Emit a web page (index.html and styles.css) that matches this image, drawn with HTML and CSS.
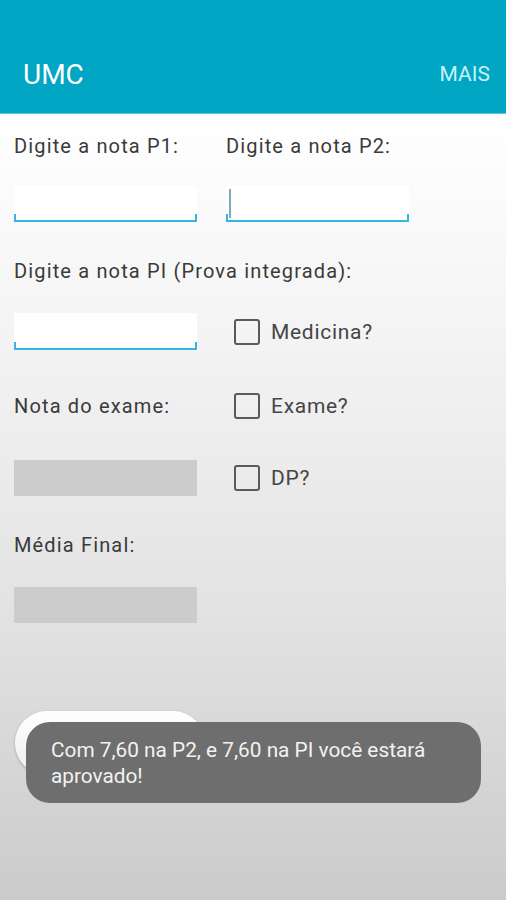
FILE: index.html
```html
<!DOCTYPE html>
<html lang="pt">
<head>
<meta charset="utf-8">
<title>UMC</title>
<link rel="stylesheet" href="styles.css">
</head>
<body>
<div class="screen">
  <header class="appbar">
    <span class="title">UMC</span>
    <span class="action">MAIS</span>
  </header>
  <main class="form">
    <div class="row r1">
      <div class="col1 label">Digite a nota P1:</div>
      <div class="col2 label">Digite a nota P2:</div>
    </div>
    <div class="row r2">
      <div class="col1 input"></div>
      <div class="col2 input focused"><span class="cursor"></span></div>
    </div>
    <div class="row r3">
      <div class="label">Digite a nota PI (Prova integrada):</div>
    </div>
    <div class="row r4">
      <div class="col1 input pi"></div>
      <label class="col2 check"><span class="box"></span><span class="check-text">Medicina?</span></label>
    </div>
    <div class="row r5">
      <div class="col1 label">Nota do exame:</div>
      <label class="col2 check"><span class="box"></span><span class="check-text">Exame?</span></label>
    </div>
    <div class="row r6">
      <div class="col1 disabled"></div>
      <label class="col2 check"><span class="box"></span><span class="check-text">DP?</span></label>
    </div>
    <div class="row r7">
      <div class="col1 label">Média Final:</div>
    </div>
    <div class="row r8">
      <div class="col1 disabled"></div>
    </div>
    <div class="row r9">
      <div class="button"><span class="btn-mark"></span></div>
    </div>
  </main>
  <div class="toast">Com 7,60 na P2, e 7,60 na PI você estará aprovado!</div>
</div>
</body>
</html>
```

FILE: styles.css
```css
* { box-sizing: border-box; }
html, body { margin: 0; padding: 0; }
body {
  font-family: Roboto, "Noto Sans", "Liberation Sans", sans-serif;
  width: 506px;
  height: 900px;
  overflow: hidden;
}
.screen {
  position: relative;
  width: 506px;
  height: 900px;
  background: linear-gradient(to bottom, #ffffff 114px, #f4f4f4 330px, #e2e2e2 620px, #cbcbcb 900px);
}
.appbar {
  height: 114px;
  background: #00a6c4;
  display: flex;
  align-items: flex-end;
  justify-content: space-between;
  padding: 0 16px 22px 23px;
  border-bottom: 1px solid #5cc8db;
}
.title {
  color: #ffffff;
  font-size: 28px;
  line-height: 32px;
}
.action {
  color: #c6f3fa;
  font-size: 21px;
  line-height: 32px;
  padding-bottom: 1px;
}
.form {
  padding: 0 14px;
}
.row {
  display: flex;
  align-items: center;
}
.col1 { width: 183px; flex: none; }
.col2 { margin-left: 29px; }
.label {
  font-size: 20px;
  line-height: 24px;
  letter-spacing: 1.15px;
  color: #3a3a3a;
  white-space: nowrap;
}
.r1 { margin-top: 20px; }
.r2 { margin-top: 28px; }
.r3 { margin-top: 37px; }
.r4 { margin-top: 30px; }
.r5 { margin-top: 43px; }
.r6 { margin-top: 41px; }
.r7 { margin-top: 37px; }
.r8 { margin-top: 30px; }
.r9 { margin-top: 88px; }
.input {
  position: relative;
  height: 36px;
  width: 183px;
  background: #ffffff;
  border-bottom: 2px solid #33b5e5;
}
.input::before, .input::after {
  content: "";
  position: absolute;
  bottom: 0;
  width: 2px;
  height: 6px;
  background: #33b5e5;
}
.input::before { left: 0; }
.input::after { right: 0; }
.input.pi { height: 37px; }
.cursor {
  position: absolute;
  left: 3px;
  top: 3px;
  width: 2px;
  height: 29px;
  background: #7fa9b8;
}
.check {
  display: flex;
  align-items: center;
  margin-left: 37px;
}
.box {
  width: 26px;
  height: 26px;
  border: 2px solid #5a5a5a;
  border-radius: 3px;
  flex: none;
}
.check-text {
  margin-left: 11px;
  font-size: 21px;
  line-height: 24px;
  letter-spacing: 0.7px;
  color: #454545;
}
.disabled {
  height: 36px;
  background: #cccccc;
}
.button {
  position: relative;
  width: 190px;
  height: 64px;
  margin-left: 1px;
  border-radius: 32px;
  background: linear-gradient(to bottom, #ffffff, #eeeeee);
  box-shadow: 0 1px 3px rgba(0,0,0,0.25);
}
.btn-mark {
  position: absolute;
  left: 90px;
  top: 22px;
  width: 14px;
  height: 4px;
  background: #9a9a9a;
}
.toast {
  position: absolute;
  left: 26px;
  top: 722px;
  width: 455px;
  height: 81px;
  padding: 15px 20px 0 25px;
  border-radius: 24px;
  background: #6e6e6e;
  color: #f2f2f2;
  font-size: 20.8px;
  line-height: 26px;
}
```
